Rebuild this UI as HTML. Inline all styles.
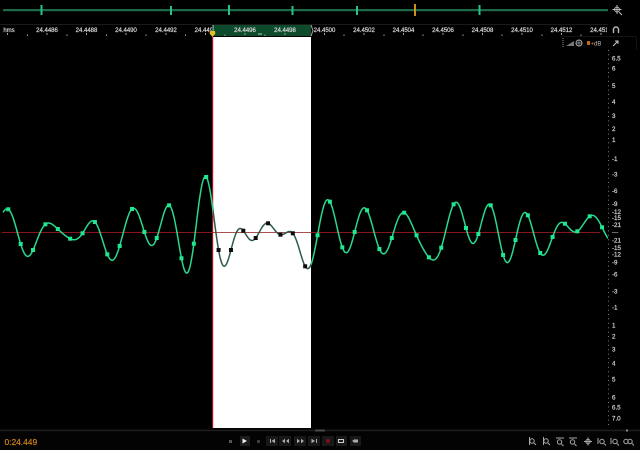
<!DOCTYPE html>
<html><head><meta charset="utf-8">
<style>
html,body{margin:0;padding:0;background:#000;width:640px;height:450px;overflow:hidden}
#r{position:relative;width:640px;height:450px;background:#000;overflow:hidden;font-family:"Liberation Sans",sans-serif}
svg{position:absolute;left:0;top:0;filter:blur(.38px)}
text{font-family:"Liberation Sans",sans-serif}
.lb text{stroke:currentColor;stroke-width:.18}
</style></head>
<body><div id="r">
<svg width="640" height="450" viewBox="0 0 640 450">
<defs>
<clipPath id="inW"><rect x="213" y="37" width="98" height="391"/></clipPath>
<clipPath id="outL"><rect x="0" y="37" width="213" height="391"/></clipPath>
<clipPath id="outR"><rect x="311" y="37" width="297" height="391"/></clipPath>
<clipPath id="rulL"><rect x="0" y="24" width="212" height="14"/></clipPath>
<clipPath id="rulM"><rect x="214" y="24" width="96" height="14"/></clipPath>
<clipPath id="rulR"><rect x="314" y="24" width="293" height="14"/></clipPath>
</defs>
<!-- overview -->
<rect x="3" y="9" width="605" height="2.2" fill="#1c6a46"/>
<g stroke="#22c585" stroke-width="2">
<path d="M41.500 5V15M171 6V15M229 5V15M292.500 6V15M357 6V15M479.500 5V15"/>
</g>
<path d="M415 4V16" stroke="#e0a020" stroke-width="1.8"/>
<!-- ruler -->
<path d="M0 24.500H608" stroke="#1a1a1a"/>
<rect x="213" y="25" width="98" height="11" fill="#0e4a2c"/>
<g class="lb" font-size="6" fill="#dcdcdc" color="#dcdcdc" text-anchor="middle">
<g clip-path="url(#rulL)">
<text x="9" y="32">hms</text>
<text x="47" y="32">24.4486</text><text x="86.500" y="32">24.4488</text><text x="126" y="32">24.4490</text><text x="166" y="32">24.4492</text><text x="205.500" y="32">24.4494</text>
</g>
<g clip-path="url(#rulM)">
<text x="245" y="32">24.4496</text><text x="285" y="32">24.4498</text>
</g>
<g clip-path="url(#rulR)">
<text x="324.500" y="32">24.4500</text><text x="364" y="32">24.4502</text><text x="403.500" y="32">24.4504</text><text x="443" y="32">24.4506</text><text x="482.500" y="32">24.4508</text><text x="522" y="32">24.4510</text><text x="561.500" y="32">24.4512</text><text x="601" y="32">24.4514</text>
</g>
</g>
<path d="M7.500 33v2M47 33v2M86.500 33v2M126 33v2M166 33v2M205.500 33v2M245 33v2M285 33v2M324.500 33v2M364 33v2M403.500 33v2M443 33v2M482.500 33v2M522 33v2M561.500 33v2M601 33v2M27.500 34.500v1.500M67 34.500v1.500M106.500 34.500v1.500M146 34.500v1.500M185.500 34.500v1.500M225 34.500v1.500M265 34.500v1.500M344 34.500v1.500M384 34.500v1.500M423 34.500v1.500M463 34.500v1.500M502 34.500v1.500M542 34.500v1.500M581 34.500v1.500" stroke="#b0b0b0" stroke-width=".9"/>
<path d="M258 33h4v2h-4z" fill="#5f8f75"/>
<path d="M311 25l2 5.500-2 5.500" fill="none" stroke="#aaa"/>
<!-- selection -->
<rect x="213" y="37" width="98" height="391" fill="#fff"/>
<rect x="212" y="37" width="1.200" height="391" fill="#a81020"/>
<rect x="212.500" y="25" width="1" height="8" fill="#9db"/>
<path d="M210 31h5l.4 2.600-2.900 3.400-2.900-3.400z" fill="#e5c020"/>
<!-- center line -->
<path d="M2 232.500H212" stroke="#8a1420"/>
<path d="M213 232.500H311" stroke="#a85050"/>
<path d="M311 232.500H600" stroke="#8a1420"/>
<!-- waveform -->
<g id="w" fill="none" stroke-linejoin="round">
<path id="p1" clip-path="url(#outL)" stroke="#2ad88e" stroke-width="1.500"/>
<path id="p2" clip-path="url(#outR)" stroke="#2ad88e" stroke-width="1.500"/>
<path id="p3" clip-path="url(#inW)" stroke="#2c5a48" stroke-width="1.500"/>
</g>
<g id="sq"></g>
<!-- right scale -->
<path d="M608.500 50V425" stroke="#777" stroke-dasharray="1 3.400" />
<g class="lb" font-size="6.200" fill="#dadada" color="#dadada" text-anchor="start">
<text x="612" y="60.500">6.5</text><text x="612" y="70.500">6</text><text x="612" y="88">5</text><text x="612" y="104">4</text><text x="612" y="118">3</text><text x="612" y="131">2</text><text x="612" y="142">1</text><text x="612" y="161">-1</text><text x="612" y="176.500">-3</text><text x="612" y="193">-6</text><text x="612" y="206">-9</text><text x="612" y="214">-12</text><text x="612" y="220">-15</text><text x="612" y="227">-21</text><text x="612" y="234.500">—</text><text x="612" y="242.500">-21</text><text x="612" y="250">-15</text><text x="612" y="256.500">-12</text><text x="612" y="264.500">-9</text><text x="612" y="276.500">-6</text><text x="612" y="293.500">-3</text><text x="612" y="309.500">-1</text><text x="612" y="327.500">1</text><text x="612" y="338.500">2</text><text x="612" y="351.500">3</text><text x="612" y="365.500">4</text><text x="612" y="381.500">5</text><text x="612" y="399.500">6</text><text x="612" y="409.500">6.5</text><text x="612" y="420.500">7.0</text>
</g>
<!-- top-right icons -->
<g fill="none" stroke="#bbb" stroke-width="1">
<circle cx="617" cy="9.500" r="2.400"/><path d="M617 5v9M612.500 9.500h9M619 12l3 3"/>
<path d="M613.500 33v-3.500a2.500 2.500 0 0 1 5 0V33" stroke-width="1.400"/>
<path d="M613 46l5-5M615 41h3v3" stroke="#ccc"/>
</g>
<path d="M560.500 36.500H636M636.500 36.500V50" stroke="#141414" fill="none"/>
<path d="M563 38v10" stroke="#666" stroke-width="1.500" stroke-dasharray="1 1"/>
<path d="M566 46l8-5v5z" fill="#777"/>
<circle cx="579" cy="43" r="3" fill="none" stroke="#aaa"/><path d="M576 43h6M579 40v6" stroke="#aaa" stroke-width=".7"/>
<rect x="587" y="41" width="3" height="4" fill="#c06a18"/>
<text x="590.500" y="45.500" font-size="6" fill="#d8862a">+</text>
<text x="594" y="45.500" font-size="6" fill="#bbb">dB</text>
<!-- bottom -->
<rect x="0" y="428" width="640" height="22" fill="#030303"/>
<path d="M0 430.500H640" stroke="#1d1d1d" stroke-width="1.600"/>
<rect x="315" y="429.500" width="10" height="2" fill="#4a4a4a"/>
<rect x="626" y="429.500" width="2" height="2" fill="#888"/>
<text x="4.500" y="445" font-size="8.400" fill="#d8881c" stroke="#d8881c" stroke-width=".15">0:24.449</text>
<!-- transport -->
<rect x="229" y="440" width="3" height="3" fill="#555"/>
<rect x="240" y="436" width="10" height="10" fill="#1c1c1c"/>
<path d="M242.500 438.500l4.500 2.500-4.500 2.500z" fill="#eee"/>
<rect x="257" y="440" width="3" height="3" fill="#3a3a3a"/>
<g fill="#181818"><rect x="266" y="436" width="12" height="10"/><rect x="279" y="436" width="12" height="10"/><rect x="294" y="436" width="12" height="10"/><rect x="308" y="436" width="12" height="10"/><rect x="322" y="436" width="12" height="10"/><rect x="336" y="436" width="11" height="10"/><rect x="350" y="436" width="11" height="10"/></g>
<g fill="#aaa">
<path d="M270 439h1v4h-1zM275 438.800v4.400l-3.500-2.200z"/>
<path d="M285 438.800v4.400l-3-2.200zM289 438.800v4.400l-3-2.200z"/>
<path d="M297 438.800v4.400l3-2.200zM301 438.800v4.400l3-2.200z"/>
<path d="M311.500 438.800v4.400l3.500-2.200zM316 439h1v4h-1z"/>
</g>
<circle cx="328" cy="441" r="2.200" fill="#7a1018"/>
<path d="M338.500 439.500h5v3h-5z" fill="none" stroke="#ccc" stroke-width="1.100"/>
<path d="M352 441l3-2v4zM355 439.500h3v3h-3z" fill="#aaa"/>
<!-- zoom icons -->
<g fill="none" stroke="#aaa" stroke-width="1">
<circle cx="532" cy="441" r="2.200"/><path d="M529.500 437v8M534 443l2 2"/>
<circle cx="546" cy="441" r="2.200"/><path d="M543.500 437v8M548 443l2 2"/>
<circle cx="559.500" cy="442" r="2.200"/><path d="M556 438h8M561.500 444l2 2"/>
<circle cx="572.500" cy="442" r="2.200"/><path d="M569 438h8M574.500 444l2 2"/>
<circle cx="588" cy="441.500" r="2.200"/><path d="M588 437.500v8M584 441.500h8"/>
<circle cx="602" cy="441.500" r="2.200"/><path d="M604 443.500l2 2M598 438v6"/>
<circle cx="615" cy="441.500" r="2.200"/><path d="M617 443.500l2 2M611 438v6"/>
<circle cx="626" cy="441.500" r="2.200"/><circle cx="630" cy="441.500" r="2.200"/><path d="M632 443.500l2 2"/>
</g>
</svg>
<script>
(function(){
var Y=[209.3,244,250,224.3,229,238.7,233.3,222,254.3,246,209,232,238,205.3,258.3,243.7,177,250,250,230.7,238,223.3,234.7,233.3,266.3,235.3,201.7,247.3,232,210.3,249,238,212.7,235.3,257.3,247.7,204.3,228,234,205.3,255,240,215.3,253,237,223.7,231.3,216.3,227.3];
var x0=8.3,dx=12.37,base=232.5,a=8;
function L(t){if(t===0)return 1;if(Math.abs(t)>=a)return 0;var p=Math.PI*t;return a*Math.sin(p)*Math.sin(p/a)/(p*p);}
var s=[];for(var i=0;i<Y.length;i++)s.push(Y[i]-base);
function ex(i){if(i>=0&&i<s.length)return s[i];if(i==-1)return -6;if(i==s.length)return 10;return 0;}
var d='';
for(var x=3;x<=608;x+=0.5){var u=(x-x0)/dx,c=Math.floor(u),v=0;
for(var k=c-a+1;k<=c+a;k++){v+=ex(k)*L(u-k);}
d+=(d?'L':'M')+x+' '+(base+v).toFixed(2);}
['p1','p2','p3'].forEach(function(id){document.getElementById(id).setAttribute('d',d);});
var g=document.getElementById('sq'),h='';
for(i=0;i<Y.length;i++){var px=x0+i*dx,w=px>213&&px<311;
h+='<rect x="'+(px-2).toFixed(2)+'" y="'+(Y[i]-2).toFixed(2)+'" width="4" height="4" fill="'+(w?'#0c0c0c':'#1fe890')+'"/>';}
g.innerHTML=h;
})();
</script>
</div></body></html>
